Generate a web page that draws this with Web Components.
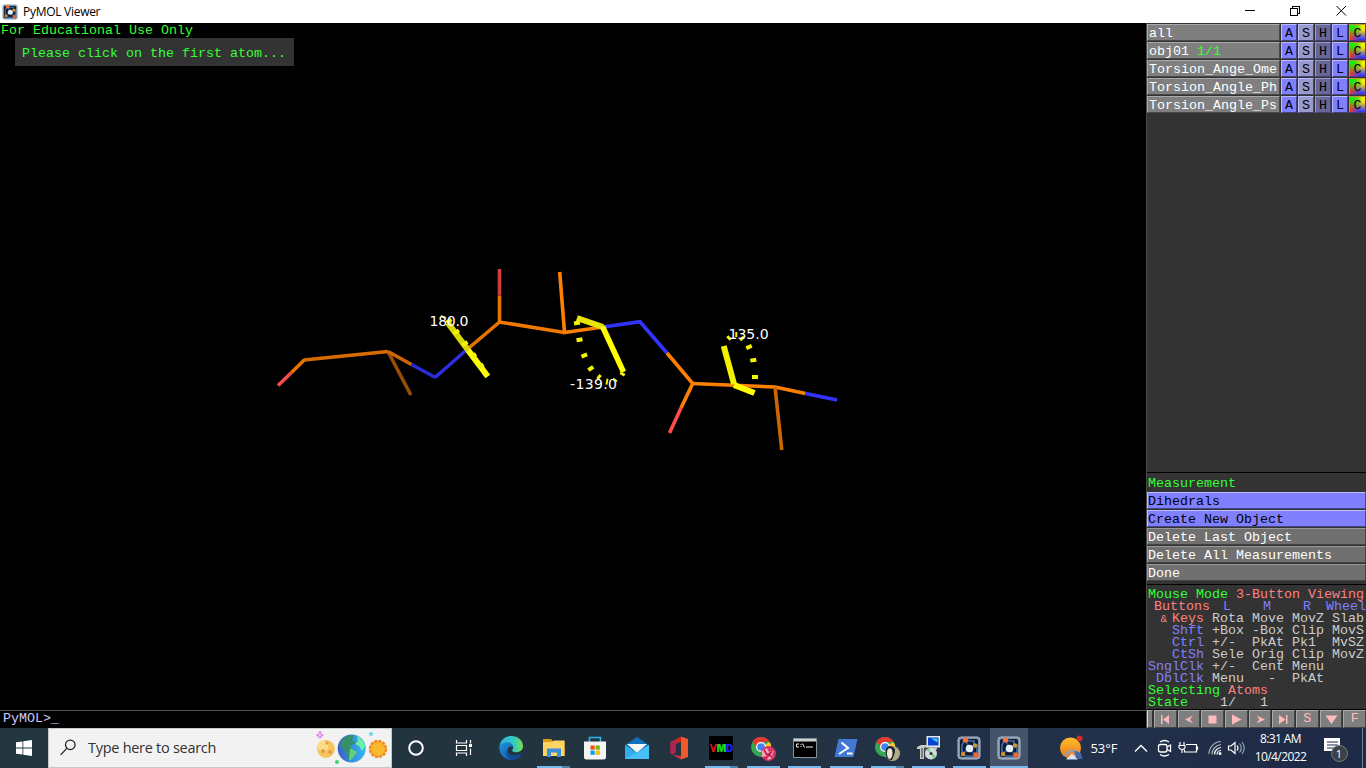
<!DOCTYPE html>
<html lang="en">
<head>
<meta charset="utf-8">
<title>PyMOL Viewer</title>
<style>
html,body{margin:0;height:768px;overflow:hidden;background:#000}
</style>
</head>
<body>
<pm-desktop></pm-desktop>
<script>
const define = (name, css, html) => customElements.define(name, class extends HTMLElement {
  constructor() {
    super();
    const markup = typeof html === 'function' ? html(this) : html;
    this.attachShadow({mode: 'open'}).innerHTML =
      `<style>*{box-sizing:border-box}${css}</style>${markup.replace(/\n/g, '')}`;
  }
});
const MONO = 'font:13.333px/12px "Liberation Mono",monospace;white-space:pre;';
const UI = '"Open Sans","Noto Sans",sans-serif';

/* application icons */
const pymol = `<rect x="1" y="1" width="22" height="22" rx="3" fill="#7d91ab" stroke="#aebed2"/>
<rect x="3" y="3" width="18" height="18" rx="2" fill="#101b2d"/>
<path d="M7 5h10v4h3v7l-3 4H8l-3-5V9z" fill="none" stroke="#3b6fae" stroke-width="1.6"/>
<path d="M12 12l-3-7M12 12l7-3M12 12l6 7M12 12l-6 6" stroke="#29568e" stroke-width="2"/>
<circle cx="12.500" cy="12.500" r="3.800" fill="#e5eff8"/><circle cx="8.500" cy="4" r="2.800" fill="#ee7444"/>
<circle cx="19" cy="19" r="2.800" fill="#ee6638"/><circle cx="18" cy="9.500" r="2.200" fill="#d2943d"/><circle cx="6" cy="18" r="2.200" fill="#cf9138"/>`;
const chrome = `<circle cx="10" cy="11" r="10" fill="#34a853"/>
<path d="M10 11L18.700 6A10 10 0 0 1 10 21l4.500-8z" fill="#fcc722"/>
<path d="M1.300 6A10 10 0 0 1 18.700 6H10l-3 6z" fill="#e53a30"/><circle cx="10" cy="11" r="5" fill="#fff"/><circle cx="10" cy="11" r="3.800" fill="#4285f4"/>`;
const ICONS = {
  pymol,
  start: `<path fill="#fff" d="M4 6.300l6.500-.9v6.200H4zM11.300 5.300L20 4v7.600h-8.700zM4 12.400h6.500v6.200L4 17.700zM11.300 12.400H20V20l-8.700-1.300z"/>`,
  search: `<g fill="none" stroke="#222" stroke-width="1.400"><circle cx="14.500" cy="8.500" r="5.200"/><path d="M10.700 12.400L4 19.500"/></g>`,
  cortana: `<circle cx="12" cy="12" r="6.800" fill="none" stroke="#fff" stroke-width="2"/>`,
  tasks: `<g fill="none" stroke="#fff" stroke-width="1.200"><path d="M4.500 4v3h10V4M4.500 20v-3h10v3M4.500 9.500h10v5h-10zM18.500 4v3.500M18.500 12.500V19"/></g><path d="M17 8h3v3h-3z" fill="#fff"/>`,
  edge: `<defs><linearGradient id="a" x1="0" x2="1"><stop stop-color="#2db1e4"/><stop offset=".6" stop-color="#31c9c0"/><stop offset="1" stop-color="#7be04a"/></linearGradient><linearGradient id="b" x1="0" y1="0" x2="1" y2="1"><stop stop-color="#1f93dc"/><stop offset="1" stop-color="#0c4c9e"/></linearGradient></defs>
<path d="M.500 11C1 4 6.500 0 12.500 0 19 0 24 4.500 24 10c0 4-3 6.200-6.500 6.200-3 0-4.500-1-4.300-2 .2-.8 1-1.200 1-2.700C14.200 9 12 7 9 7 5 7 .500 10 .500 11z" fill="url(#a)"/>
<path d="M.300 12C.300 8.500 4.500 6 8.500 6.300c3.500.2 5.700 2.500 5.700 5.200-1-1.800-5.200-1.500-5.700 2.200C8 18 13 21.500 20.500 18.500c1.500-.6 2 0 1.200 1C19.800 22.300 16.500 24 12.500 24 5.500 24 .300 18.500.300 12z" fill="url(#b)"/><path d="M8.500 14c-.2 5 5 7.500 12 4.500 1.500-.6 2 0 1.200 1C19 23 16 24 13 24 8 22 6 17 8.500 14z" fill="#114a94"/>`,
  folder: `<path d="M1 3h8l2 2.500h11.500V20H1z" fill="#e2a520"/><path d="M1 6h9l2-1.500h10.500V20H1z" fill="#fcd565"/><path d="M1 3h8v3H1z" fill="#dc9c12"/><path d="M5 12.500h14V21h-4v-4.500H9V21H5z" fill="#3990dc"/>`,
  store: `<path d="M6.500 6V1.500h11V6" fill="none" stroke="#2eb4e8" stroke-width="1.600"/><path d="M1 5.500h22V21a2.500 2.500 0 0 1-2.500 2.500h-17A2.500 2.500 0 0 1 1 21z" fill="#f4f4f4"/><path d="M7.500 9.500h4.200v4.200H7.500z" fill="#f04e1f"/><path d="M12.600 9.500h4.200v4.200h-4.200z" fill="#7ab800"/><path d="M7.500 14.600h4.200v4.200H7.500z" fill="#00a3ee"/><path d="M12.600 14.600h4.200v4.200h-4.200z" fill="#fcb900"/>`,
  mail: `<path d="M0 9L12 1l12 8v4H0z" fill="#1170bd"/><path d="M2 8h20l-10 9z" fill="#f4f6f8"/><path d="M0 9l12 7.500L24 9v14H0z" fill="#31aeea"/><path d="M24 9L7 19.500 0 23h24z" fill="#4fc3f7" opacity=".8"/>`,
  office: `<path d="M14 .500L21 3v18l-7 2.500z" fill="#f05a28"/><path d="M14 .500v5.300L8.500 8v9L5 18.500 3.500 17V6z" fill="#c92820"/><path d="M5 18.500L14 23.500V20L7 19z" fill="#d93443"/><path d="M3.500 6L8.500 4v13L3.500 18z" fill="#ad2555"/>`,
  cmd: `<path d="M.500 2.500h23v19H.500z" fill="#000" stroke="#8c9398"/><path d="M1 3h22v2.500H1z" fill="#cdd0d2"/><path d="M6 8H3.500v3H6M8 8v1M8 10v1M9.500 7.500l2 4M13 11h7" stroke="#eee" fill="none" stroke-width="1"/>`,
  shell: `<path d="M4.500 3H23.500L19.500 21H.500z" fill="#4379d4"/><path d="M7.500 6.500l6.500 5.500-9 6M13 17.500h5.500" fill="none" stroke="#fff" stroke-width="2"/>`,
  chromeRose: `${chrome}<circle cx="17.500" cy="17.500" r="7.500" fill="#d6315f"/><path d="M11 15l5-3 2 4 5-1-2 4 2 2-6 3-2-4-4 1z" fill="#f7a6ba"/><path d="M13 14l3 5 5-3M15 22l4-3 3 3" fill="none" stroke="#b91442" stroke-width="1.500"/>`,
  chromeFace: `${chrome}<circle cx="17.500" cy="17.500" r="7.500" fill="#b2aa87"/><path d="M11 20c-2-7 2-12 7-9 4 2 1 8-1 13-3 0-5-1-6-4z" fill="#15252c"/><path d="M13 13c3-2 5 1 4.500 5-.3 3-1.500 5-3.500 5-2-2-3-7-1-10z" fill="#f0e3d5"/>`,
  setup: `<path d="M10.500 0h13.500v11.500H10.500z" fill="#e9e9e4"/><path d="M12 1.500h10.500v8H12z" fill="#0943d5"/><path d="M15 2.500h6.500v4z" fill="#41d3f4"/><path d="M17 11.500h4v2h-4z" fill="#c8cac5"/><path d="M1 11l4-2h6v3H8v11H4V13H1z" fill="#c8cac5"/><path d="M6 12v10M9.500 11v11" stroke="#555" stroke-width="1.300"/><circle cx="15" cy="17.500" r="6" fill="#d4dbdc"/><path d="M15 17l-5-3 3-2.500zM15 17l5 3-3 3z" fill="#7ecb87"/><circle cx="15" cy="17.500" r="1.600" fill="#333"/>`,
  weather: `<defs><linearGradient id="w" y2="1" x2="0"><stop stop-color="#fbc02b"/><stop offset="1" stop-color="#f0741c"/></linearGradient></defs><circle cx="10.500" cy="12" r="10.500" fill="url(#w)"/><path d="M5 20a8.500 8.500 0 0 1 15-1" fill="none" stroke="#a59a9c" stroke-width="3"/><path d="M14 15c5 0 8 3 8.500 8h-5z" fill="#3b68ad"/><path d="M6 23.500l6-6 6 6z" fill="#d6e5fb"/><circle cx="19.500" cy="2.500" r="3" fill="#d82b20"/>`,
  up: `<path d="M6 15.500l6-6 6 6" fill="none" stroke="#fff" stroke-width="1.400"/>`,
  camera: `<g fill="none" stroke="#fff" stroke-width="1.300"><rect x="5.500" y="8.500" width="8.500" height="7.500" rx="2"/><path d="M14 11l3.500-2v6.500L14 13.500M7 6q4.500-3 9 0M7 18.500q4.500 3 9 0"/></g>`,
  battery: `<g fill="none" stroke="#fff" stroke-width="1.200"><path d="M9 8.500h10.500v7.500h-12v-2.500M20.500 10.500v3.500M3 6v3M7 6v3M2 9.500h6v2q-1 2-3 2t-3-2zM5 13.500V17"/></g>`,
  wifi: `<g fill="none" stroke="#fff" stroke-width="1.200"><path d="M14 18.500a4 4 0 0 1 4-4M11.500 18.500a7 7 0 0 1 6.500-7"/><path d="M9 18.500a10 10 0 0 1 9-10M6 18A12.500 12.500 0 0 1 18 5.500" stroke="#a6b0bf"/></g><circle cx="17" cy="17.500" r="1.500" fill="#fff"/>`,
  volume: `<g fill="none" stroke="#fff" stroke-width="1.200"><path d="M4.500 10h2.500l4-3.500v11L7 14H4.500zM13 9.500q2 2.500 0 5"/><path d="M15.500 7.500q3.500 4.500 0 9M18 6q4.500 6 0 12" stroke="#97a3b4"/></g>`,
  vmd: `<rect width="24" height="24"/>`
};
define('pm-icon', ':host{display:block;flex:none;width:var(--s,24px);height:var(--s,24px)}svg{display:block;width:100%;height:100%;overflow:visible}',
  el => `<svg viewBox="0 0 24 24">${ICONS[el.getAttribute('name')]}</svg>`);

/* title bar */
define('title-bar', `:host{display:flex;height:23px;background:#fff;align-items:center;padding:0 19px 0 2px;font:12px/23px ${UI};color:#000}
pm-icon{--s:16px;margin-right:5px}span{flex:1;letter-spacing:-.28px}svg{display:block}`,
`<pm-icon name="pymol"></pm-icon><span>PyMOL Viewer</span>
<svg width="102" height="20" viewBox="0 0 102 20" fill="none" stroke="#000" shape-rendering="crispEdges"><path d="M0 8.500h10M45.500 6.500h7v7h-7zM47.500 6V4.500h7v7H53"/><path shape-rendering="auto" d="M91.500 4l9.500 9.500M101 4L91.500 13.500"/></svg>`);

/* molecule scene */
const seg = (c, pts, w = 3.6) => `<polyline points="${pts}" stroke="${c}" stroke-width="${w}"/>`;
const dot = (x, y, a, w = 6, h = 4) => `<rect x="${-w / 2}" y="${-h / 2}" width="${w}" height="${h}" fill="#f5f500" stroke="none" transform="translate(${x} ${y}) rotate(${a})"/>`;
define('molecule-view', `:host{display:block;position:relative;height:687px;background:#000;color:#3f3;${MONO}}
svg{position:absolute;left:0;top:0}text{font:14px "DejaVu Sans",sans-serif;fill:#fff}
.edu{padding:2px 0 0 1px;height:15px}.hint{width:279px;height:28px;margin-left:15px;background:#333;padding:10px 7px 0}`,
`<div class="edu">For Educational Use Only</div><div class="hint">Please click on the first atom...</div>
<svg width="1146" height="687" viewBox="0 23 1146 687" fill="none">
${seg('#994d00', '388,351.5 410.8,395')}
${seg('#f64b4b', '278,385.500 291.500,372.500')}${seg('#e67300', '291.500,372.500 304.500,359.700')}
${seg('#d96c00', '304,360 388,351.500')}${seg('#cc6600', '388,351.500 411.500,364.500')}
${seg('#2a2ad6', '411.500,364.500 435.500,377.500')}${seg('#2e2ee0', '435,377.500 467,349.500')}
${seg('#e67300', '467,349.500 499.500,322 499.500,295.500')}${seg('#cf3e3e', '499.500,295.500 499.500,269')}
${seg('#f27900', '499,322 564.500,332.500')}${seg('#ff8000', '559.700,272 564.500,332.500 603,327')}
${seg('#3333ff', '603,327 640,321.700 667,353')}${seg('#ff8000', '667,353 692.700,383.500 681,408')}
${seg('#ff4d4d', '681,408 669.500,433')}${seg('#ff8000', '692,383.500 775,387 805.500,393.500')}
${seg('#3333ff', '805.500,393.500 837,400')}${seg('#cc6600', '775,387 781.800,450')}
${seg('#d9d900', '448,323 468,350', 6)}${seg('#ffff00', '468,350 487.800,376.500', 6)}
${dot(443, 317, 30, 5, 2)}${dot(449, 321, -35)}${dot(456.5, 332, -35)}${dot(465, 343.5, -35)}${dot(473.5, 355.5, -35)}${dot(481, 366, -35)}
${seg('#e6e600', '577,318 603,327', 6)}${seg('#ffff00', '602.500,326.500 623.500,372', 5.5)}
${dot(577, 323, -10)}${dot(579.5, 339.7, -10)}${dot(584.3, 355.5, -20)}${dot(590.8, 368.5, -35, 6)}${dot(599, 377, -50, 5, 3)}${dot(607, 381.7, 100, 6, 2)}${dot(615, 380, 40, 5, 2)}${dot(622.5, 374, 30, 5, 3)}
${seg('#f2f200', '723.700,346 734,384', 6)}${seg('#ffff00', '734,385 754.500,393', 6)}
${dot(729, 338, 45, 5, 3)}${dot(736.3, 334.5, 90, 5, 2)}${dot(742, 338.500, -40, 5, 3)}${dot(749, 347, -25)}${dot(753.3, 360.2, -8)}${dot(755, 377, 0)}
<text x="429.500" y="326" textLength="39">180.0</text><text x="570" y="389" textLength="47">-139.0</text><text x="728.500" y="339">135.0</text>
</svg>`);
define('command-line', `:host{display:block;height:18px;border-top:1px solid #555;background:#000;color:#ccf;padding:2px 3px 0;${MONO}}`, 'PyMOL&gt;_');

/* object list */
define('bevel-key', `:host{display:block;box-sizing:border-box;width:16px;height:17px;background:var(--f);border:1px solid;border-color:var(--hi,#bbf) var(--lo,#447) var(--lo,#447) var(--hi,#bbf);color:#000;text-align:center;padding-top:3px;${MONO}}`, '<slot></slot>');
define('object-row', `:host{display:flex;gap:1px;height:17px;margin-bottom:1px;${MONO}color:#fff}
.n{width:133px;background:#7f7f7f;border:1px solid;border-color:#aaa #484848 #484848 #aaa;padding:3px 0 0 1px;overflow:hidden}::slotted(b){font-weight:400;color:#3f3}
.c{width:17px;--f:radial-gradient(circle at 10% 5%,#1e1 10%,#1e10 60%),radial-gradient(circle at 95% 5%,#fe0 15%,#fe00 70%),radial-gradient(circle at 100% 100%,#33f 25%,#33f0 75%),linear-gradient(90deg,#f31,#e80);--hi:#b93;--lo:#539}`,
`<div class="n"><slot></slot></div><bevel-key style="--f:#8080ff">A</bevel-key><bevel-key style="--f:#9999cc">S</bevel-key><bevel-key style="--f:#666699;--hi:#99c">H</bevel-key><bevel-key style="--f:#8080ff">L</bevel-key><bevel-key class="c">C</bevel-key>`);
define('menu-row', `:host{display:block;box-sizing:border-box;height:17px;margin-bottom:1px;background:#707070;border:1px solid;border-color:#999 #444 #444 #999;color:#fff;padding:3px 0 0 0;${MONO}}
:host([on]){background:#8080ff;color:#000;border-color:#bbf #448 #448 #bbf}`, '<slot></slot>');

/* mouse-mode table */
const R = (k, a, b, c, d) => `<div class="r"><i>${k}</i><span>${a}</span><span>${b}</span><span>${c}</span><span>${d}</span></div>`;
define('mouse-table', `:host{display:block;box-sizing:border-box;height:125px;padding:4px 0 0 1px;color:#ccc;${MONO}}div{height:12px}
.r{display:grid;grid-template-columns:64px 40px 40px 40px 34px}.r i{font-style:normal;color:#8080ff;text-align:right;padding-right:8px}
.a{font-size:11px;margin-right:5px}.g{color:#3f3}.p{color:#ff8080}.b{color:#8080ff}
.h{display:flex;padding-left:6px}.h span:nth-child(1){width:69px}.h span:nth-child(2),.h span:nth-child(3){width:40px}.h span:nth-child(4){width:23px}`,
`<div class="g">Mouse Mode <span class="p">3-Button Viewing</span></div>
<div class="h b"><span class="p">Buttons</span><span>L</span><span>M</span><span>R</span><span>Wheel</span></div>
${R('<span class="p a">&amp;</span><span class="p">Keys</span>', 'Rota', 'Move', 'MovZ', 'Slab')}
${R('Shft', '+Box', '-Box', 'Clip', 'MovS')}${R('Ctrl', '+/-', 'PkAt', 'Pk1', 'MvSZ')}${R('CtSh', 'Sele', 'Orig', 'Clip', 'MovZ')}
${R('SnglClk', '+/-', 'Cent', 'Menu', '')}${R('DblClk', 'Menu', '  -', 'PkAt', '')}
<div class="g">Selecting <span class="p">Atoms</span></div><div><span class="g">State</span>    1/   1</div>`);

define('movie-bar', `:host{display:flex;height:18px;gap:1px;background:#333}
div{flex:1;height:18px;background:#7f7f7f;border:1px solid;border-color:#aaa #444 #444 #aaa;display:grid;place-items:center;color:#fbb;${MONO}}.e{flex:none;width:6px;background:#7f7f7f;border-color:#aaa #333 #444 #ddd}svg{fill:#fbb;display:block}`,
  () => '<div class="e"></div>' + ['M3 3h1.500v9H3zM11 3v9L5 7.500z', 'M11 3.500L8 7.500l3 4-8-4z', 'M3.500 3.500h8v8h-8z', 'M3 2.500L12.500 7.500 3 12.500z', 'M3.500 3.500l3 4-3 4 8.500-4z', 'M3 3v9l6.500-4.500zM10 3h1.500v9H10z', 'S', 'M1.500 3.500h12L7.500 12z', 'F']
    .map(d => `<div>${d.length < 2 ? d : `<svg width="15" height="15"><path d="${d}"/></svg>`}</div>`).join(''));

define('side-panel', `:host{display:flex;box-sizing:border-box;flex-direction:column;width:220px;height:705px;background:#333;border-left:1px solid #4a4a4a;${MONO}}
.o{height:450px;padding-top:1px;border-bottom:1px solid #000}.m{height:112px;padding-top:1px;border-bottom:1px solid #000;color:#3f3}.t{height:18px;padding:4px 0 0 1px}mouse-table{border-bottom:1px solid #000}`,
`<div class="o"><object-row>all</object-row><object-row>obj01 <b>1/1</b></object-row><object-row>Torsion_Ange_Ome</object-row><object-row>Torsion_Angle_Ph</object-row><object-row>Torsion_Angle_Ps</object-row></div>
<div class="m"><div class="t">Measurement</div><menu-row on>Dihedrals</menu-row><menu-row on>Create New Object</menu-row><menu-row>Delete Last Object</menu-row><menu-row>Delete All Measurements</menu-row><menu-row>Done</menu-row></div>
<mouse-table></mouse-table><movie-bar></movie-bar>`);

/* task bar */
define('task-slot', `:host{display:grid;place-items:center;height:40px;width:var(--w);position:relative;flex:none}
:host([run])::after{content:"";position:absolute;bottom:0;left:calc(50% - 16.500px);width:33px;height:2px;background:#76b9ed}
:host([many])::after{background:linear-gradient(90deg,#76b9ed 25px,#4f83aa 25px)}
:host([active]){background:#45546a}:host([active])::after{width:38px;left:0}
.v{position:absolute;font:700 10px/24px Inter,sans-serif;letter-spacing:-.3px;color:#e11}.v b:nth-child(1){color:#1fd81f}.v b:nth-child(2){color:#22f}`,
  el => `<pm-icon name="${el.getAttribute('icon')}"></pm-icon>${el.getAttribute('icon') === 'vmd' ? '<span class="v">V<b>M</b><b>D</b></span>' : ''}`);
define('search-box', `:host{display:flex;box-sizing:border-box;width:344px;height:40px;background:#f2f2f2;border:1px solid #c3c8ca;align-items:center;font:14.5px/38px ${UI};color:#333;flex:none}
pm-icon{--s:22px;margin:0 9px 0 8px}span{flex:1;letter-spacing:-.28px}svg{display:block;margin-right:3px}`,
`<pm-icon name="search"></pm-icon><span>Type here to search</span>
<svg width="72" height="38" viewBox="316 729 72 38"><defs><linearGradient id="e"><stop stop-color="#3b5fc4"/><stop offset=".5" stop-color="#348ee0"/><stop offset="1" stop-color="#39baf0"/></linearGradient></defs>
<g fill="#e591e6"><circle cx="320" cy="732.500" r="1.600"/><circle cx="322" cy="735" r="1.600"/><circle cx="320" cy="737" r="1.600"/><circle cx="317.800" cy="735" r="1.600"/></g><circle cx="326" cy="749" r="9" fill="#f5c45e"/><circle cx="323" cy="746" r="5.500" fill="#fbdc87"/><g fill="#e59b45"><circle cx="327" cy="743" r="1.500"/><circle cx="323" cy="751" r="2"/><circle cx="330" cy="752" r="2"/></g>
<circle cx="351.700" cy="748.500" r="14" fill="url(#e)"/><path d="M341 741q6-7 13-6l-2 5 4 3-6 3 4 5-5 9-3-8-6-6z" fill="#36906b"/><path d="M357 736q6 3 8 10l-3 5-3-5-4-2 3-3z" fill="#6bf0a4"/><path d="M350 748l7 4-4 6-4 3z" fill="#61d07b"/>
<circle cx="337" cy="762" r="2" fill="#42cf70"/><circle cx="371" cy="734" r="2" fill="#68d9ed"/><circle cx="378" cy="749" r="8" fill="#fbae28" stroke="#f18a23" stroke-width="2.500" stroke-dasharray="3 1.200"/><circle cx="378" cy="749" r="6.500" fill="#fbb92e"/></svg>`);
define('system-tray', `:host{display:flex;flex:1;height:40px;align-items:center;color:#fff;font:13px/18px ${UI};padding-left:32px}
.w{width:41px;padding-left:7px;letter-spacing:-.1px;white-space:nowrap}.k{width:76px;margin-left:-5px;text-align:center;font-size:12px;line-height:18px;letter-spacing:-.6px}
.n{position:relative;width:30px;height:28px;margin-left:4px}.n svg{display:block}.n span{position:absolute;left:8px;top:11px;width:17px;height:17px;border-radius:9px;background:#3d4249;border:1px solid #767b82;text-align:center;font-size:11px;line-height:15px}.d{width:1px;height:40px;background:#77839a;margin-left:auto;margin-right:3px}`,
`<pm-icon name="weather"></pm-icon><span class="w">53°F</span><pm-icon name="up" style="margin-left:4px"></pm-icon><pm-icon name="camera"></pm-icon><pm-icon name="battery"></pm-icon><pm-icon name="wifi" style="margin-left:2px"></pm-icon><pm-icon name="volume" style="margin-left:-3px"></pm-icon>
<div class="k">8:31 AM<br>10/4/2022</div><div class="n"><svg width="18" height="24"><path d="M1 4h16v13h-4l-4 4v-4H1z" fill="#fff"/><path d="M4 8h11M4 11h11M4 14h7" stroke="#1d2b42"/></svg><span>1</span></div><div class="d"></div>`);
define('task-bar', ':host{display:flex;height:40px;background:linear-gradient(90deg,#22363f,#22343f 45%,#22304a 80%,#1d2945)}',
`<task-slot icon="start" style="--w:48px"></task-slot><search-box></search-box>
${[['cortana', 48], ['tasks', 48], ['edge', 45], ['folder', 41, 'run many'], ['store', 41.5], ['mail', 42], ['office', 42.5], ['vmd', 42.5, 'run many'], ['chromeRose', 41.5, 'run'], ['cmd', 41.5, 'run'], ['shell', 41, 'run'], ['chromeFace', 41, 'run many'], ['setup', 41, 'run'], ['pymol', 41, 'run'], ['pymol', 38, 'run active']].map(([n, w, f = '']) => `<task-slot icon="${n}" style="--w:${w}px" ${f}></task-slot>`).join('')}
<system-tray></system-tray>`);

define('pm-desktop', ':host{display:block;width:1366px;height:768px;overflow:hidden}main{display:flex}.l{width:1146px}',
`<title-bar></title-bar><main><div class="l"><molecule-view></molecule-view><command-line></command-line></div><side-panel></side-panel></main><task-bar></task-bar>`);
</script>
</body>
</html>
